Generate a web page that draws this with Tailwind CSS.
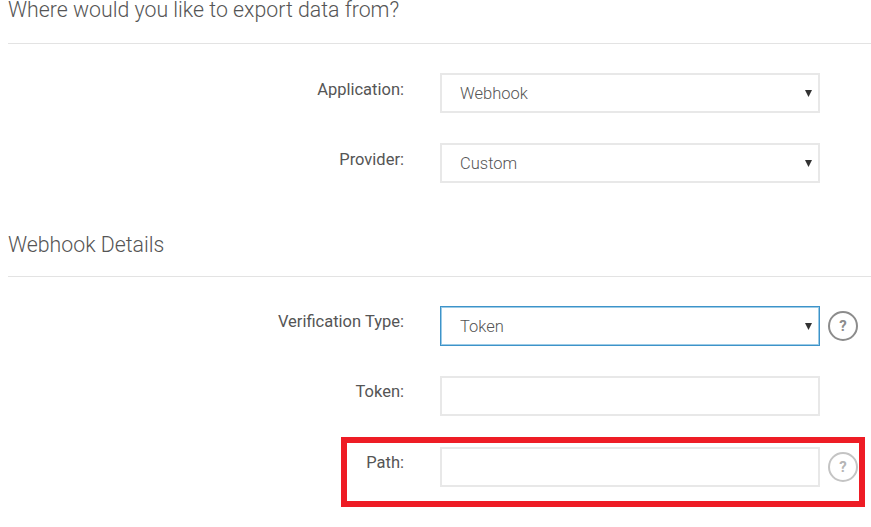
<!DOCTYPE html>
<html lang="en">
<head>
    <meta charset="UTF-8">
    <title>Export data</title>
    <script src="https://cdn.jsdelivr.net/npm/@tailwindcss/browser@4"></script>
</head>
<body class="bg-white font-['Roboto',sans-serif] text-[#555] overflow-hidden">
    <div class="relative w-[871px] h-[527px] overflow-hidden pl-2">
        <!-- export source -->
        <h2 class="h-[44px] border-b border-[#e3e3e3] text-[21.3px] leading-5 font-light text-[#555]">Where would you like to export data from?</h2>

        <div class="flex items-start mt-[29px] h-10">
            <label class="w-[396px] pt-[7px] text-right text-[16.5px] leading-5 text-[#555]">Application:</label>
            <div class="relative ml-9 w-[380px] h-10">
                <select class="appearance-none w-full h-full pl-[18px] pt-[2px] bg-white border-2 border-[#e8e8e8] text-[16.5px] font-light text-[#555] outline-none">
                    <option>Webhook</option>
                </select>
                <svg class="absolute right-[8px] top-[17px] w-[7px] h-[7px]" viewBox="0 0 7 7"><path d="M0 0h7L3.500 7z" fill="#333"/></svg>
            </div>
        </div>

        <div class="flex items-start mt-[30px] h-10">
            <label class="w-[396px] pt-[7px] text-right text-[16.5px] leading-5 text-[#555]">Provider:</label>
            <div class="relative ml-9 w-[380px] h-10">
                <select class="appearance-none w-full h-full pl-[18px] pt-[2px] bg-white border-2 border-[#e8e8e8] text-[16.5px] font-light text-[#555] outline-none">
                    <option>Custom</option>
                </select>
                <svg class="absolute right-[8px] top-[17px] w-[7px] h-[7px]" viewBox="0 0 7 7"><path d="M0 0h7L3.500 7z" fill="#333"/></svg>
            </div>
        </div>

        <!-- webhook details -->
        <h2 class="mt-[50px] h-[44px] border-b border-[#e3e3e3] text-[21.3px] leading-6 font-light text-[#555]">Webhook Details</h2>

        <div class="flex items-start mt-[29px] h-10">
            <label class="w-[396px] pt-[6px] text-right text-[16.5px] leading-5 text-[#555]">Verification Type:</label>
            <div class="relative ml-9 w-[380px] h-10">
                <select class="appearance-none w-full h-full pl-[19px] pt-[2px] bg-white border border-[#3d93c9] shadow-[inset_0_0_0_1px_#9ccbe6] text-[16.5px] font-light text-[#555] outline-none">
                    <option>Token</option>
                </select>
                <svg class="absolute right-[8px] top-[17px] w-[7px] h-[7px]" viewBox="0 0 7 7"><path d="M0 0h7L3.500 7z" fill="#333"/></svg>
            </div>
            <div class="ml-2 mt-[5px] w-[30px] h-[30px] rounded-full border-2 border-[#8c8c8c] flex items-center justify-center text-[15px] font-bold text-[#8c8c8c]">?</div>
        </div>

        <div class="flex items-start mt-[30px] h-10">
            <label class="w-[396px] pt-[6px] text-right text-[16.5px] leading-5 text-[#555]">Token:</label>
            <input class="ml-9 w-[380px] h-10 bg-white border-2 border-[#e8e8e8] outline-none">
        </div>

        <div class="flex items-start mt-[31px] h-10">
            <label class="w-[396px] pt-[6px] text-right text-[16.5px] leading-5 text-[#555]">Path:</label>
            <input class="ml-9 w-[380px] h-10 bg-white border-2 border-[#e8e8e8] outline-none">
            <div class="ml-2 mt-[5px] w-[30px] h-[30px] rounded-full border-2 border-[#c4c4c4] flex items-center justify-center text-[15px] font-bold text-[#b5b5b5]">?</div>
        </div>

        <!-- annotation box -->
        <div class="absolute left-[341px] top-[437px] w-[524px] h-[70px] border-[6px] border-[#ee1c25]"></div>
    </div>
</body>
</html>
